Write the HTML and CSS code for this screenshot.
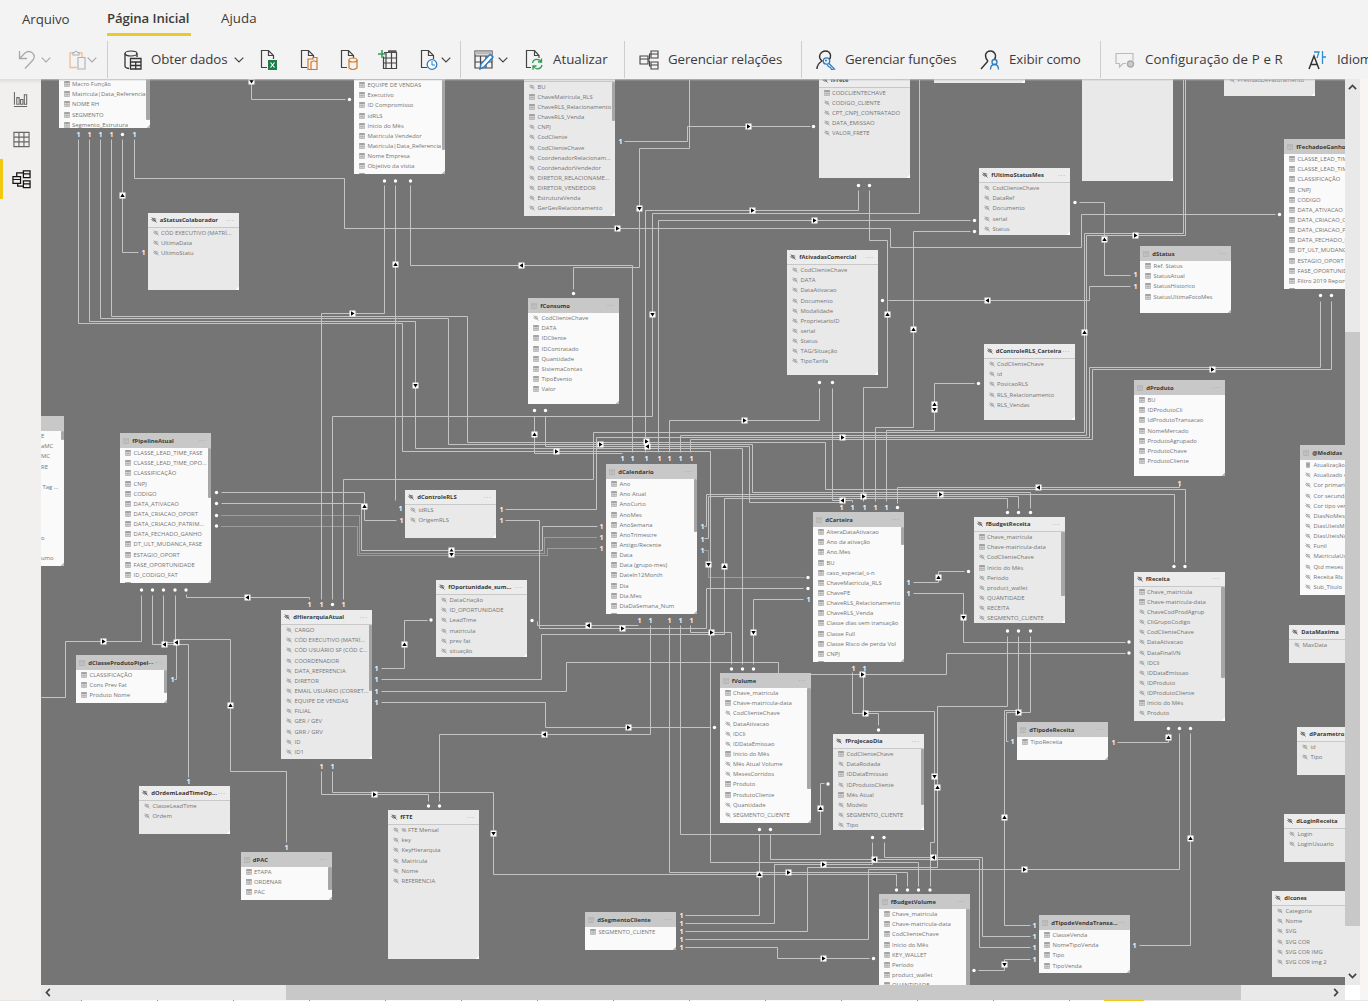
FILE: index.html
```html
<!DOCTYPE html>
<html lang="pt-BR">
<head>
<meta charset="utf-8">
<title>Modelo</title>
<link rel="stylesheet" href="styles.css">
</head>
<body>
<svg class="defs" width="0" height="0" aria-hidden="true">
  <symbol id="i-table" viewBox="0 0 14 14"><path d="M1 1h12v12H1z" fill="#e4e4e4" stroke="#8a8a8a"/><path d="M1 1h12v3H1z" fill="#8a8a8a"/><path d="M5 4v9M9 4v9M1 8.5h12" stroke="#8a8a8a" fill="none"/></symbol>
  <symbol id="i-tablehead" viewBox="0 0 14 14"><path d="M1 1h12v12H1zM1 4h12M5 4v9M9 4v9" fill="none" stroke="#a0a0a0"/></symbol>
  <symbol id="i-hidden" viewBox="0 0 14 14"><path d="M1 6Q6 1 12 5M2 7Q6 12 12 8M2 1l11 12" fill="none" stroke="currentColor" stroke-width="1.5"/><circle cx="7" cy="6.5" r="1.500" fill="currentColor"/></symbol>
  <symbol id="i-calc" viewBox="0 0 14 14"><path d="M3 1h8v12H3z" fill="#8a8a8a"/><path d="M4.500 3h5M4.500 7h5M4.500 10h5" stroke="#eee"/></symbol>
  <symbol id="i-down" viewBox="0 0 10 6"><path d="M.7.7 5 5 9.300.7" fill="none" stroke="currentColor" stroke-width="1.200"/></symbol>
  <symbol id="i-page" viewBox="0 0 18 22"><path d="M7 18.500H1.500v-17h7l5 5V10M8.500 1.500v5h5" fill="none" stroke="#444" stroke-width="1.200"/></symbol>
</svg>
<header class="ribbon">
  <nav class="tabs"><a class="tab file">Arquivo</a><a class="tab active">Página Inicial</a><a class="tab help">Ajuda</a></nav>
  <div class="tools">
    <div class="group g-edit">
      <svg class="ic undo" viewBox="0 0 18 20"><path d="M1.500 1v7.500H9M1.500 8.500 7 3q4-3 7.500 0 3.500 3.500 0 7.500L7 18.500" fill="none" stroke="#a9a9a9" stroke-width="1.300"/></svg>
      <svg class="chev off"><use href="#i-down"/></svg>
      <svg class="ic paste" viewBox="0 0 17 20"><path d="M8 17.500H1V3h3m6 0h3v4" fill="none" stroke="#eebf96" stroke-width="1.300"/><path d="M4 5V2.500h1.500Q7-.5 8.500 2.500H10V5zM9 7.500h7V19H9z" fill="none" stroke="#b0b0b0" stroke-width="1.100"/></svg>
      <svg class="chev off"><use href="#i-down"/></svg>
    </div>
    <div class="group g-data">
      <svg class="ic db" viewBox="0 0 18 20"><ellipse cx="7" cy="3.500" rx="6" ry="2.500" fill="none" stroke="#333" stroke-width="1.200"/><path d="M1 3.500V16q0 2 4 2.500M13 3.500V7M6.500 8.500H17V19H6.500zM6.500 12H17M6.500 15.500H17M11.700 12v7" fill="none" stroke="#333" stroke-width="1.300"/></svg>
      <span class="label obter">Obter dados</span>
      <svg class="chev"><use href="#i-down"/></svg>
      <svg class="ic xls" viewBox="0 0 18 22"><use href="#i-page" width="18" height="22"/><path d="M8 11h9v10H8z" fill="#1d7c47"/><path d="m10.500 13.500 4 5m0-5-4 5" stroke="#fff" stroke-width="1.200"/></svg>
      <svg class="ic pbi" viewBox="0 0 18 22"><use href="#i-page" width="18" height="22"/><path d="M8 20.500V10h5V8.500h4V20.500zM11 20.500V13q3-2 6 0" fill="#f3f3f3" stroke="#d17a27" stroke-width="1.200"/></svg>
      <svg class="ic sql" viewBox="0 0 18 22"><use href="#i-page" width="18" height="22"/><path d="M9 11v8q4 3 8 0v-8" fill="#f3f3f3" stroke="#d17a27" stroke-width="1.200"/><ellipse cx="13" cy="11" rx="4" ry="2" fill="#f3f3f3" stroke="#d17a27" stroke-width="1.200"/></svg>
      <svg class="ic enter" viewBox="0 0 20 22"><path d="M6 3.500h12.500v16H5.500v-12M8 4v15.500M13.500 4v15.500M5.500 9h13M5.500 14h13" fill="none" stroke="#444" stroke-width="1.200"/><path d="M10 2.500h8.500" stroke="#555" stroke-width="2.500"/><path d="M4 1v8M0 5h8" stroke="#339a58" stroke-width="1.500"/></svg>
      <svg class="ic recent" viewBox="0 0 18 22"><use href="#i-page" width="18" height="22"/><circle cx="12" cy="15.500" r="4.800" fill="#fff" stroke="#2b7cc0" stroke-width="1.300"/><path d="M12 12v4h3" fill="none" stroke="#2b7cc0"/></svg>
      <svg class="chev near"><use href="#i-down"/></svg>
    </div>
    <div class="group g-query">
      <svg class="ic edit" viewBox="0 0 20 20"><path d="M1 1h17v17H1zM1 6h17M6.500 6v12M12 6v12M1 12h17" fill="none" stroke="#444" stroke-width="1.200"/><path d="M1 3h17" stroke="#bbb" stroke-width="3"/><path d="m6 19 1-5L16 4.500l3 2.500-9 10z" fill="#fff" stroke="#2b7cc0" stroke-width="1.400"/></svg>
      <svg class="chev near2"><use href="#i-down"/></svg>
      <svg class="ic refresh" viewBox="0 0 18 22"><path d="M6 18.500H1.500v-17h8l4.500 5V9M9.500 1.500v5H14" fill="none" stroke="#444" stroke-width="1.200"/><path d="M7.500 14q1-4 5-3.500 2.500 0 4 2.500m0-3.500V13H13M17 16q-1 4-5 3.800-2.500-.3-4-2.800m0 3.800V17h3.500" fill="none" stroke="#339a58" stroke-width="1.300"/></svg>
      <span class="label">Atualizar</span>
    </div>
    <div class="group g-rel">
      <svg class="ic rel" viewBox="0 0 20 20"><path d="M1 6h8v8H1zM1 9h8M12 1h7v7h-7zM12 4h7M12 12h7v7h-7zM12 15h7M9 9h1.500V4H12M9 11h1.500v5H12" fill="none" stroke="#444" stroke-width="1.100"/></svg>
      <span class="label">Gerenciar relações</span>
    </div>
    <div class="group g-roles">
      <svg class="ic role" viewBox="0 0 20 20"><path d="M1 19q0-5 5-8Q2.500 8 4 4.500 6 1 9.500 1q4 0 5 4 .5 3-1.500 5" fill="none" stroke="#333" stroke-width="1.400"/><path d="M13 13.500 18.500 19l-3 .5-1-2-2-1-1.500-2" fill="#f3f3f3" stroke="#2b7cc0" stroke-width="1.200"/><circle cx="10.500" cy="11" r="3.200" fill="#f3f3f3" stroke="#2b7cc0" stroke-width="1.300"/><circle cx="10" cy="10.500" r="1" fill="#2b7cc0"/></svg>
      <span class="label funcoes">Gerenciar funções</span>
      <svg class="ic viewas" viewBox="0 0 20 20"><path d="M1 19l7-8M14 10q2-2 1.500-5Q14 1 10.500 1q-4 0-5 4 0 4 2.500 6" fill="none" stroke="#333" stroke-width="1.400"/><circle cx="14.500" cy="12" r="2.500" fill="#f3f3f3" stroke="#2b7cc0" stroke-width="1.300"/><path d="M10.500 19.500q0-5 4-5t4 5" fill="none" stroke="#2b7cc0" stroke-width="1.300"/></svg>
      <span class="label">Exibir como</span>
    </div>
    <div class="group g-qa">
      <svg class="ic qa" viewBox="0 0 20 20"><path d="M11 13.500H8L4.500 17v-3.500H1v-10h17v7" fill="none" stroke="#bcbcbc" stroke-width="1.200"/><circle cx="15.500" cy="14" r="3" fill="#ccc" stroke="#aaa" stroke-width="1.400"/></svg>
      <span class="label config">Configuração de P e R</span>
      <svg class="ic lang" viewBox="0 0 18 20"><path d="m1 19 5-13 5 13M3 14.500h6" fill="none" stroke="#333" stroke-width="1.500"/><path d="M6 2h5L9 8M14.500 1v13M14.500 7h3.500" fill="none" stroke="#2b8fd0" stroke-width="1.300"/></svg>
      <span class="label">Idiomas</span>
    </div>
  </div>
</header>
<main class="workspace">
  <aside class="rail">
    <a class="view"><svg viewBox="0 0 18 18"><path d="M1.500 1v13.500M1 16.500h14M4 7h2.500v7H4zM8 9h2.500v5H8zM12 4h2.500v10H12z" fill="none" stroke="#666" stroke-width="1.100"/></svg></a>
    <a class="view"><svg viewBox="0 0 18 18"><path d="M1 1.500h16v15H1zM1 6.500h16M1 11.500h16M6.300 2v14.500M11.600 2v14.500" fill="none" stroke="#666" stroke-width="1.200"/></svg></a>
    <a class="view current"><svg viewBox="0 0 20 20"><path d="M1 7h8v7H1zM1 10h8M12 1h7v7h-7zM12 4h7M12 11.500h7v7h-7zM12 14.500h7M5 7V3h7M6 14v3h6" fill="none" stroke="#111" stroke-width="1.300"/></svg></a>
  </aside>
  <section class="board">
    <div class="canvas" id="canvas"></div>
    <div class="vbar"><svg class="up" viewBox="0 0 10 6"><path d="M1 5.300 5 1.300l4 4" fill="none" stroke="#444" stroke-width="1.900"/></svg><i class="vthumb"></i><svg class="dn" viewBox="0 0 10 6"><path d="m1 .7 4 4 4-4" fill="none" stroke="#444" stroke-width="1.900"/></svg></div>
    <div class="hbar"><svg viewBox="0 0 6 10"><path d="M5 1 1.300 5 5 9" fill="none" stroke="#444" stroke-width="1.900"/></svg><i class="hthumb"></i><svg class="rt" viewBox="0 0 6 10"><path d="m1 1 3.700 4L1 9" fill="none" stroke="#444" stroke-width="1.900"/></svg></div>
    <div class="corner"></div>
  </section>
</main>
<footer class="pages"><i class="pages-lead"></i><i class="pages-mark"></i></footer>
<script src="model.js"></script>
</body>
</html>
```
FILE: styles.css
```css
* { box-sizing: border-box; }
body { margin: 0; width: 1368px; height: 1001px; overflow: hidden; display: flex; flex-direction: column; background: #f8f6f5; font-family: "Open Sans", "Noto Sans", sans-serif; }
.defs { position: absolute; }
.ribbon { flex: none; height: 79px; background: #f3f3f3; color: #3b3b3b; overflow: hidden; }
.tabs { display: flex; height: 38px; padding-left: 22px; font-size: 13.3px; line-height: 38px; }
.tab { height: 36px; white-space: nowrap; letter-spacing: -.1px; }
.file { width: 85px; }
.help { line-height: 37px; letter-spacing: .05px; }
.active { width: 84px; margin-right: 30px; font-size: 13.2px; font-weight: 600; letter-spacing: -.1px; border-bottom: 3px solid #ecc82b; line-height: 36px; }
.tools { display: flex; height: 41px; padding-top: 3px; }
.group { flex: none; height: 37px; display: flex; align-items: center; border-right: 1px solid #cdcdcd; }
.g-edit { width: 108px; padding-left: 18px; }
.g-data { width: 353px; padding-left: 15px; }
.g-query { width: 164px; padding-left: 13px; }
.g-rel { width: 177px; padding-left: 14px; }
.g-roles { width: 299px; padding-left: 14px; }
.g-qa { width: 280px; padding-left: 14px; border: 0; }
.ic { flex: none; width: 20px; height: 20px; margin-right: 9px; }
.label { flex: none; font-size: 13.3px; line-height: 18px; padding-bottom: 2px; white-space: nowrap; letter-spacing: -.1px; }
.chev { flex: none; width: 10px; height: 6px; color: #444; }
.off { color: #a9a9a9; }
.undo { width: 18px; margin-right: 5px; }
.paste { width: 17px; margin-left: 18px; margin-right: 1px; }
.obter { width: 78px; margin-right: 5px; }
.db { margin-right: 8px; }
.xls, .pbi, .sql, .recent, .refresh { width: 18px; height: 22px; }
.xls { margin-left: 16px; margin-right: 22px; }
.pbi { margin-right: 22px; }
.sql { margin-right: 20px; }
.enter { height: 22px; margin-right: 22px; }
.recent { margin-right: 3px; }
.near2 { margin-right: 17px; }
.g-query .edit { margin-right: 4px; }
.g-query .label { letter-spacing: .02px; }
.refresh { margin-right: 10px; }
.funcoes { width: 112px; margin-right: 23px; }
.viewas { margin-right: 9px; }
.config { width: 139px; margin-right: 24px; letter-spacing: .12px; }
.qa { margin-right: 10px; }
.g-qa .lang { width: 18px; margin-right: 11px; }
.workspace { flex: none; display: flex; height: 921px; }
.rail { width: 41px; background: linear-gradient(#dedddc, #f2f0ef 5px); }
.view { display: flex; height: 40px; align-items: center; padding-left: 13px; }
.view svg { width: 17px; height: 17px; }
.current { border-left: 3px solid #f2c811; padding-left: 9px; }
.current svg { width: 19px; height: 19px; }
.board { display: grid; grid-template: 906px 15px / 1304px 15px; }
.canvas { position: relative; overflow: hidden; background: #757575; }
.canvas::before { content: ""; position: absolute; z-index: 3; left: 0; right: 0; top: 0; height: 2px; background: linear-gradient(#bbb, transparent); }
.vbar { background: #e9e9e9; display: flex; flex-direction: column; align-items: center; padding-top: 5px; }
.vbar svg { flex: none; width: 9px; height: 6px; }
.vthumb { width: 15px; height: 594px; margin: 242px 0 47px; background: #c8c8c8; }
.hbar { background: #e9e9e9; display: flex; align-items: center; padding-left: 4px; }
.hbar svg { width: 6px; height: 9px; }
.hthumb { width: 955px; height: 15px; margin: 0 92px 0 235px; background: #c8c8c8; }
.corner { background: #fff; }
.pages { display: flex; height: 1px; background: #e6e6e6; }
.pages-lead { width: 1023px; margin-left: 81px; background: repeating-linear-gradient(90deg, #999 0 1px, #f8f8f8 1px 76px); }
.pages-mark { width: 40px; background: #f2c811; }
.wires { position: absolute; left: 0; top: 0; }
.wire { fill: none; stroke: #c4c4c4; stroke-width: 1; stroke-linejoin: round; }
.dotted { stroke-dasharray: 1 1; }
.one { font: bold 7px "Open Sans", sans-serif; fill: #f2f2f2; text-anchor: middle; }
.many { fill: #fff; }
.flow { fill: #fff; }
.tip { fill: #000; }
.node { position: absolute; width: 91px; overflow: hidden; background: #fafafa; color: #747474; font-size: 5.900px; }
.node.muted { background: #e9e9e9; }
.node-head { display: flex; align-items: center; height: 15px; padding-left: 3px; background: #c8c8c8; color: #383838; font-weight: bold; font-size: 5.850px; }
.muted .node-head { background: #ececec; border-bottom: .6px solid #c8c8c8; }
.node-head svg { width: 6px; height: 6px; margin-right: 3.300px; flex: none; }
.node-title { flex: 1; white-space: nowrap; }
.more { width: 12px; color: #999; font-weight: normal; font-size: 6.500px; letter-spacing: .9px; }
.field { display: flex; align-items: center; height: 10.160px; padding-left: 5px; white-space: nowrap; line-height: 10px; }
.field svg { width: 6px; height: 6px; margin-right: 2.500px; flex: none; color: #8e8e8e; }
.thumb { position: absolute; right: 0; top: 15px; width: 3.500px; background: #a6a6a6; border-radius: 1px; }
.grip { position: absolute; right: 0; bottom: 0; width: 3px; height: 3px; background: linear-gradient(135deg, transparent 45%, #bbb 45%); }
.muted .grip { background: linear-gradient(135deg, transparent 40%, #fff 40%); }
.node.cut .field { padding-left: 0; }
```
FILE: model.js
```js
// Board origin in window coordinates.
const OX = 41, OY = 79;

// title, x, y, height, style (v = visible, m = muted), scroll thumb height, fields.
// A field starts with its icon: t = column, h = hidden, c = measure, - = none.
const tables = [
  ["", 58.5, 64, 64, "v", 41, "tMacro Função|tMatricula|Data_Referencia|tNOME RH|tSEGMENTO|tSegmento_Estrutura"],
  ["", 354, 65, 108.5, "v", 70, "tEQUIPE DE VENDAS|tExecutivo|tID Compromisso|tidRLS|tInicio do Mês|tMatricula Vendedor|tMatricula|Data_Referencia|tNome Empresa|tObjetivo da visita|t"],
  ["", 524, 66.500, 149.500, "m", 39, "hBU|tChaveMatricula_RLS|tChaveRLS_Relacionamento|tChaveRLS_Venda|hCNPJ|hCodCliente|hCodClienteChave|hCoordenadorRelacionam...|hCoordenadorVendedor|hDIRETOR_RELACIONAME...|hDIRETOR_VENDEDOR|hEstruturaVenda|hGerGevRelacionamento"],
  ["fFrete", 818.5, 72.500, 105.500, "m", 0, "tCODCLIENTECHAVE|hCODIGO_CLIENTE|hCPT_CNPJ_CONTRATADO|hDATA_EMISSAO|hVALOR_FRETE"],
  ["", 934, 60, 23, "m", 0, ""],
  ["", 1081.5, 60, 121, "m", 0, ""],
  ["", 1224, 60, 36, "m", 0, "hPrevisaoDeFaturamento"],
  ["fFechadoeGanho", 1284, 139, 149.500, "v", 0, "tCLASSE_LEAD_TIME_FASE|tCLASSE_LEAD_TIME_OPO|tCLASSIFICAÇÃO|tCNPJ|tCODIGO|tDATA_ATIVACAO|tDATA_CRIACAO_OPORT|tDATA_CRIACAO_PATRIM|tDATA_FECHADO_GANHO|tDT_ULT_MUDANCA|tESTAGIO_OPORT|tFASE_OPORTUNIDADE|tFiltro 2019 Report|t"],
  ["aStatusColaborador", 147.5, 213, 77, "m", 0, "hCÓD EXECUTIVO (MATRÍ...|hUltimaData|hUltimoStatu"],
  ["fUltimoStatusMes", 979, 168, 67, "m", 0, "hCodClienteChave|hDataRef|hDocumento|hserial|hStatus"],
  ["dStatus", 1140, 246, 67, "v", 0, "tRef. Status|tStatusAtual|tStatusHistorico|tStatusUltimaFotoMes"],
  ["fAtivadasComercial", 787, 250, 125, "m", 0, "hCodClienteChave|hDATA|hDataAtivacao|hDocumento|hModalidade|hProprietarioID|hserial|hStatus|hTAG/Situação|hTipoTarifa"],
  ["fConsumo", 528, 298, 106, "v", 0, "hCodClienteChave|tDATA|tIDCliente|tIDContratado|tQuantidade|tSistemaContas|tTipoEvento|tValor"],
  ["dControleRLS_Carteira", 983.5, 344, 76, "m", 0, "hCodClienteChave|hid|hPosicaoRLS|hRLS_Relacionamento|hRLS_Vendas"],
  ["dProduto", 1134, 380, 96, "v", 0, "tBU|tIDProdutoCli|tIdProdutoTransacao|tNomeMercado|tProdutoAgrupado|tProdutoChave|tProdutoCliente"],
  ["", 41, 416, 150, "v cut", 9, "-E|-aMC|-MC|-RE|-|- Tag ...|-|-|-|-|-o|-|-umo"],
  ["fPipelineAtual", 120, 433, 149.500, "v", 50, "tCLASSE_LEAD_TIME_FASE|tCLASSE_LEAD_TIME_OPO...|tCLASSIFICAÇÃO|tCNPJ|tCODIGO|tDATA_ATIVACAO|tDATA_CRIACAO_OPORT|tDATA_CRIACAO_PATRIM...|tDATA_FECHADO_GANHO|tDT_ULT_MUDANCA_FASE|tESTAGIO_OPORT|tFASE_OPORTUNIDADE|tID_CODIGO_FAT|t"],
  ["dControleRLS", 405, 490, 48, "m", 0, "hidRLS|hOrigemRLS"],
  ["dCalendario", 606, 464, 149.500, "v", 53, "tAno|tAno Atual|tAnoCurto|tAnoMes|tAnoSemana|tAnoTrimestre|tAntigo/Recente|tData|tData (grupo-mes)|tDateIn12Month|tDia|tDia.Mes|tDiaDaSemana_Num|t"],
  ["dCarteira", 813, 512, 149.500, "v", 18, "tAlteraDataAtivacao|tAno da ativação|tAno.Mes|tBU|tcaso_especial_s-n|tChaveMatricula_RLS|tChavePE|tChaveRLS_Relacionamento|tChaveRLS_Venda|tClasse dias sem transação|tClasse Full|tClasse Risco de perda Vol|tCNPJ|t"],
  ["fBudgetReceita", 973.5, 517, 106, "m", 64, "tChave_matricula|tChave-matricula-data|hCodClienteChave|tInicio do Mês|hPeriodo|hproduct_wallet|hQUANTIDADE|hRECEITA|hSEGMENTO_CLIENTE"],
  ["@Medidas", 1300, 445, 150, "v", 0, "cAtualização|hAtualizado em|hCor primaria|hCor secundaria|hCor tipo venda|hDiasNoMes|hDiasUteisMes|hDiasUteisNoMes|hFunil|hMatriculaUser|hQtd meses|hReceita Rls|hSub_Titulo"],
  ["fOportunidade_sum...", 436, 580, 77, "m", 0, "hDataCriação|hID_OPORTUNIDADE|hLeadTime|hmatricula|hprev fat|hsituação"],
  ["fReceita", 1133.5, 571.500, 149, "m", 91, "tChave_matricula|tChave-matricula-data|hChaveCodProdAgrup|hCliGrupoCodigo|hCodClienteChave|hDataAtivacao|hDataFinalVN|hIDCli|hIDDataEmissao|hIDProduto|hIDProdutoCliente|tInicio do Mês|hProduto"],
  ["DataMaxima", 1289, 625, 38, "m", 0, "hMaxData"],
  ["dHierarquiaAtual", 281, 610, 149, "m", 66, "hCARGO|hCÓD EXECUTIVO (MATRÍ...|hCÓD USUÁRIO SF (CÓD C...|hCOORDENADOR|hDATA_REFERENCIA|hDIRETOR|hEMAIL USUÁRIO (CORRET...|hEQUIPE DE VENDAS|hFILIAL|hGER / GEV|hGRR / GRV|hID|hID1"],
  ["dClasseProdutoPipel···", 76, 655, 47.500, "v", 23, "tCLASSIFICAÇÃO|tCons Prev Fat|tProduto Nome|t"],
  ["fVolume", 719.5, 673, 149.500, "v", 101, "tChave_matricula|tChave-matricula-data|hCodClienteChave|hDataAtivacao|hIDCli|hIDDataEmissao|tInicio do Mês|hMês Atual Volume|hMesesCorridos|tProduto|tProdutoCliente|hQuantidade|hSEGMENTO_CLIENTE"],
  ["fProjecaoDia", 833, 734, 96, "m", 56, "tCodClienteChave|hDataRodada|tIDDataEmissao|hIDProdutoCliente|tMês Atual|hModelo|hSEGMENTO_CLIENTE|hTipo"],
  ["dTipodeReceita", 1017, 722, 38, "v", 0, "tTipoReceita"],
  ["dParametro", 1297, 727, 48, "m", 0, "hid|hTipo"],
  ["dLoginReceita", 1284, 814, 48, "m", 0, "hLogin|hLoginUsuario"],
  ["dIcones", 1272, 891, 86, "m", 0, "hCategoria|hNome|hSVG|hSVG COR|hSVG COR IMG|hSVG COR img 2"],
  ["dOrdemLeadTimeOp...", 139, 786, 48, "m", 0, "hClasseLeadTime|hOrdem"],
  ["dPAC", 240.5, 852, 48, "v", 23, "tETAPA|tORDENAR|tPAC|t"],
  ["fFTE", 388, 810, 149, "m", 0, "h% FTE Mensal|hkey|hKeyHierarquia|hMatricula|hNome|hREFERENCIA"],
  ["dSegmentoCliente", 585, 912, 38, "v", 0, "tSEGMENTO_CLIENTE"],
  ["fBudgetVolume", 878.5, 894, 149, "v", 80, "tChave_matricula|tChave-matricula-data|tCodClienteChave|tInicio do Mês|tKEY_WALLET|tPeriodo|tproduct_wallet|tQUANTIDADE"],
  ["dTipodeVendaTransa...", 1039, 915, 58, "v", 0, "tClasseVenda|tNomeTipoVenda|tTipo|tTipoVenda"]
];

const wires = [
  "M78 139V323H402V451H710V862H918V886", "M89 139V321H415V448H742V664", "M100 139V318H448V444H752V492H1030V508",
  "M111 139V316H467V442H825V489H1185V562", "M122 139V252H138", "M134 139V178H344V228H890V247H1081V214H1275",
  "M251 79V99H345", "M384 185V313H321V599", "M395 185V500", "M410 185V265H632V452",
  "M624 141H687V126H810", "M689 79V148H639V267H573V289", "M858 190V210H645V452", "M869 190V240H887V387H863V501",
  "M919 79V213H652V416H332V599", "M970 220H658V452", "M970 231H913V427H875V501", "M1079 202H1104V275H1130", "M1130 286H1089V300H888",
  "M1183 79V233H1084V432H593V479H343V599", "M1185 79V235H1086V435H680V452", "M1320 301V367H1089V437H596V509H505", "M1331 301V369H1092V439H690V452",
  "M974 383H934V430H886V501", "M819 388V420H669V452", "M832 388V500H852V502", "M534 416V453H622", "M545 416V446H749V502H841",
  "M704 526H706V494H1174V562", "M704 538H708V496H1018V508", "M381 679H541V634H724V498H1007V508", "M897 503V487H1179V484",
  "M803 588H706V628H539V520H505", "M638 625H537V621", "M803 599H753V664", "M650 625V734H439V801", "M669 625V872H907V886",
  "M680 625V834H820V783H824", "M690 625V632H731V664", "M321 771V794H428V801", "M332 771V792H493V874H896V886",
  "M381 668H404V620H427", "M381 691H566V662H778V674H946V653H1125", "M381 702H545V727H710", "M309 599V597H186V594",
  "M141 595V641H65V697H41", "M152 595V644H188V777", "M163 595V642H176V679H174", "M175 595V639H230V771H286V842",
  "M221 492H364V520H396", "M221 503H361V550H542V526H597", "M913 582H938V571H964", "M913 593H963V642H1125",
  "M852 672V713H878V725", "M863 672V711H934V842H930V886", "M1007 636V706H937V867H807V931H685", "M1018 636V710H1004V925H1030", "M1030 636V712H1006V741H1008",
  "M1117 742H1168V733", "M1179 733V869H868V939H685", "M1190 733V945H1139", "M1030 936H982V857H884V842", "M1030 947H979V859H770V834",
  "M1030 959H1004V970H978", "M872 842V864H774V923H685", "M759 834V915H685", "M685 947H777V958H869"
];
const dotted = ["M221 515H359V553H544V537H597", "M221 526H357V555H547V548H597", "M704 550H708V577H804"];

const ones = [[78,134],[89,134],[100,134],[111,134],[134,134],[143,252],[620,141],[1135,274],[1135,286],[400,508],[401,520],[622,458],[632,458],[646,458],[659,458],[669,458],[680,458],[691,458],[501,509],[501,520],[601,526],[601,537],[601,548],[702,526],[702,539],[702,550],[841,507],[852,507],[864,507],[875,507],[886,507],[808,599],[908,582],[908,593],[1179,483],[309,604],[321,604],[343,604],[172,679],[639,620],[650,620],[669,620],[680,620],[691,620],[376,668],[376,679],[376,691],[376,702],[853,668],[864,668],[321,766],[332,766],[188,781],[286,847],[1012,741],[1113,742],[1034,925],[1034,936],[1034,947],[1034,959],[1134,945],[681,915],[681,923],[681,931],[681,939],[681,947]];
const manys = [[122.500,134.500],[349.500,99.500],[384.500,181],[395.500,181],[410.500,181],[573.500,293.500],[813.500,126.500],[858.500,185.500],[869.500,185.500],[974.500,220.500],[974.500,231.500],[1075,202.500],[1279.500,214.500],[882.500,300.500],[978.500,383.500],[819.500,382.500],[832.500,382.500],[534.500,410.500],[545.500,410.500],[1320.500,295.500],[1331.500,295.500],[216.500,492.500],[216.500,503.500],[216.500,515.500],[216.500,526],[332.500,604.500],[897.500,507.500],[1007.500,512.500],[1018.500,512.500],[1030.500,512.500],[1174,566.500],[1185,566.500],[808,577.500],[808,588.500],[532,620.500],[431,620],[731.500,669],[742.500,669],[753.500,669],[968.500,571.500],[1129,642],[1129,653],[1007.500,631],[1018.500,631],[1030.500,631],[141.500,590],[152.500,590],[163.500,590],[175,590],[186,590],[714.500,727.500],[878.500,730],[828,784],[428.500,806],[439.500,806],[759.500,829.500],[770.500,829.500],[872.500,837.500],[884,837.500],[896.500,890],[907.500,890],[918.500,890],[930,890],[1168.500,728.500],[1179.500,728.500],[1190.500,728.500],[873.500,958.500],[974,970.500]];
// x, y, direction in degrees (0 = right)
const flows = [[251,81,90],[122,195,270],[617,228,0],[352,313,0],[395,264,270],[521,265,180],[748,126,0],[639,208,90],[752,210,0],[814,220,0],[652,314,90],[887,314,270],[913,329,270],[1104,239,270],[987,300,180],[1135,235,0],[1084,332,270],[1212,369,0],[415,385,90],[934,404,270],[934,409,90],[744,420,0],[534,434,270],[646,441,0],[647,446,180],[600,444,0],[556,451,0],[842,437,0],[842,500,180],[863,496,0],[940,494,0],[1038,487,180],[364,506,270],[451,550,270],[451,554,90],[708,564,90],[724,566,270],[753,632,90],[588,625,180],[622,628,0],[711,632,0],[938,577,270],[963,617,90],[247,597,180],[103,641,0],[164,644,180],[176,642,180],[404,644,270],[230,705,270],[862,674,0],[865,713,0],[628,727,0],[544,734,180],[374,794,0],[493,833,90],[820,808,270],[934,776,90],[937,787,270],[1018,712,0],[1004,817,270],[1168,737,270],[1190,838,270],[1024,869,0],[933,857,180],[874,859,180],[823,864,0],[788,872,0],[759,874,270],[823,958,0],[1004,964,90]];

const icon = n => `<svg viewBox="0 0 14 14"><use href="#i-${n}"/></svg>`;
const names = { t: "table", h: "hidden", c: "calc" };

let svg = `<svg class="wires" width="1304" height="906" viewBox="${OX} ${OY} 1304 906"><g transform="translate(.5 .5)">`;
svg += wires.map(d => `<path class="wire" d="${d}"/>`).join("");
svg += dotted.map(d => `<path class="wire dotted" d="${d}"/>`).join("") + "</g>";
svg += ones.map(([x, y]) => `<text class="one" x="${x + .5}" y="${y + 2.5}">1</text>`).join("");
svg += manys.map(([x, y]) => `<circle class="many" cx="${x}" cy="${y}" r="1.700"/>`).join("");
svg += flows.map(([x, y, a]) => `<g transform="translate(${x + .5} ${y + .5}) rotate(${a})"><path class="flow" d="M-3-3H3V3H-3z"/><path class="tip" d="M-1.500-2.200 2 0-1.500 2.200z"/></g>`).join("");
svg += "</svg>";

const nodes = tables.map(([title, x, y, h, style, thumb, fields]) => {
  const muted = style === "m";
  // A pipe inside a name is followed by a capital letter that is no icon key.
  const rows = fields ? fields.split(/\|(?=[thc-])/) : [];
  const body = rows.map(f => `<div class="field">${names[f[0]] ? icon(names[f[0]]) : ""}<span>${f.slice(1).replace(/^ /, "&nbsp;")}</span></div>`).join("");
  const head = title ? icon(muted ? "hidden" : "tablehead") + `<span class="node-title">${title}</span><span class="more">···</span>` : "";
  return `<div class="node ${muted ? "muted" : style}" style="left:${x - OX}px;top:${y - OY}px;height:${h}px${style === "v cut" ? ";width:23px" : ""}">`
    + `<div class="node-head">${head}</div>`
    + body + (thumb ? `<i class="thumb" style="height:${thumb}px"></i>` : "") + `<i class="grip"></i></div>`;
}).join("");

document.getElementById("canvas").innerHTML = svg + nodes;
```
